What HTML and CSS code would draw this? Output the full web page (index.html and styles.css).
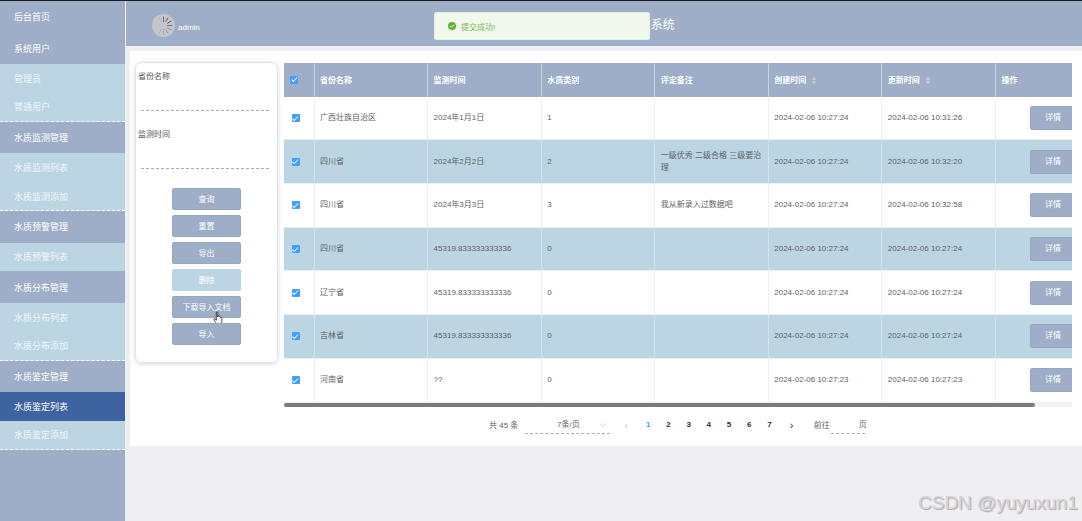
FILE: index.html
```html
<!DOCTYPE html>
<html lang="zh">
<head>
<meta charset="utf-8">
<title>水质监测预警管理系统</title>
<link rel="stylesheet" href="styles.css">
</head>
<body>
<div class="app">
  <nav class="sidebar">
    <div class="nav-item dark tall">后台首页</div>
    <div class="nav-item dark tall">系统用户</div>
    <div class="nav-item light">管理员</div>
    <div class="nav-item light end">普通用户</div>
    <div class="nav-item dark tall">水质监测管理</div>
    <div class="nav-item light">水质监测列表</div>
    <div class="nav-item light end">水质监测添加</div>
    <div class="nav-item dark tall">水质预警管理</div>
    <div class="nav-item light">水质预警列表</div>
    <div class="nav-item dark tall">水质分布管理</div>
    <div class="nav-item light">水质分布列表</div>
    <div class="nav-item light end">水质分布添加</div>
    <div class="nav-item dark tall">水质鉴定管理</div>
    <div class="nav-item active">水质鉴定列表</div>
    <div class="nav-item light end">水质鉴定添加</div>
  </nav>
  <div class="main">
    <header class="topbar">
      <svg class="avatar" viewBox="0 0 24 24" aria-hidden="true">
        <circle cx="12" cy="12" r="12" fill="#c4c6cb"/>
        <g stroke-width="1" stroke-linecap="round">
          <path stroke="#6d7076" d="M12 3v5"/>
          <path stroke="#5c5f65" d="M16.5 4.2l-2 3.5"/>
          <path stroke="#55585e" d="M19.8 7.5l-3.5 2"/>
          <path stroke="#777a80" d="M21 12h-5"/>
          <path stroke="#8b8e94" d="M19.8 16.5l-3.5-2"/>
          <path stroke="#9a9da2" d="M16.5 19.8l-2-3.5"/>
          <path stroke="#a6a9ae" d="M12 21v-5"/>
          <path stroke="#adb0b4" d="M7.5 19.8l2-3.5"/>
          <path stroke="#b2b4b8" d="M7.5 4.2l2 3.5"/>
        </g>
      </svg>
      <span class="admin">admin</span>
      <h1 class="title">水质监测预警管理系统</h1>
    </header>
    <section class="content">
      <aside class="filter">
        <label class="field-label">省份名称</label>
        <div class="field-line"></div>
        <label class="field-label second">监测时间</label>
        <div class="field-line"></div>
        <div class="actions">
          <button class="btn">查询</button>
          <button class="btn">重置</button>
          <button class="btn">导出</button>
          <button class="btn pale">删除</button>
          <button class="btn hover">下载导入文档
            <svg class="hand" viewBox="0 0 12 16" aria-hidden="true">
              <path d="M3.6 1.6c0-1 1.5-1 1.5 0v4.6l.2-1c.3-.8 1.4-.6 1.4.3l.1.8c.3-.8 1.4-.6 1.4.3l.1.7c.4-.7 1.4-.4 1.4.4v3.6c0 1.2-.5 2-1 3H4.3C3.6 13.3 2.9 12.2 1 9.5c-.6-.9.4-1.800 1.200-1.100L3.6 9.700z" fill="#fff" stroke="#222" stroke-width=".9" stroke-linejoin="round"/>
            </svg>
          </button>
          <button class="btn">导入</button>
        </div>
      </aside>
      <div class="table-panel">
        <div class="table-clip">
          <table class="grid">
            <thead>
              <tr>
                <th class="c-check"><span class="check"></span></th>
                <th>省份名称</th>
                <th>监测时间</th>
                <th>水质类别</th>
                <th>评定备注</th>
                <th>创建时间<svg class="sort" viewBox="0 0 6 7" aria-hidden="true"><path d="M3 0l2.500 2.700H.5zM3 7L.5 4.300h5z"/></svg></th>
                <th>更新时间<svg class="sort" viewBox="0 0 6 7" aria-hidden="true"><path d="M3 0l2.500 2.700H.5zM3 7L.5 4.300h5z"/></svg></th>
                <th class="c-op">操作</th>
              </tr>
            </thead>
            <tbody>
              <tr><td class="c-check"><span class="check"></span></td><td>广西壮族自治区</td><td>2024年1月1日</td><td>1</td><td></td><td>2024-02-06 10:27:24</td><td>2024-02-06 10:31:26</td><td class="c-op"><button class="detail">详情</button></td></tr>
              <tr><td class="c-check"><span class="check"></span></td><td>四川省</td><td>2024年2月2日</td><td>2</td><td>一级优秀 二级合格 三级要治理</td><td>2024-02-06 10:27:24</td><td>2024-02-06 10:32:20</td><td class="c-op"><button class="detail">详情</button></td></tr>
              <tr><td class="c-check"><span class="check"></span></td><td>四川省</td><td>2024年3月3日</td><td>3</td><td>我从新录入过数据吧</td><td>2024-02-06 10:27:24</td><td>2024-02-06 10:32:58</td><td class="c-op"><button class="detail">详情</button></td></tr>
              <tr><td class="c-check"><span class="check"></span></td><td>四川省</td><td>45319.833333333336</td><td>0</td><td></td><td>2024-02-06 10:27:24</td><td>2024-02-06 10:27:24</td><td class="c-op"><button class="detail">详情</button></td></tr>
              <tr><td class="c-check"><span class="check"></span></td><td>辽宁省</td><td>45319.833333333336</td><td>0</td><td></td><td>2024-02-06 10:27:24</td><td>2024-02-06 10:27:24</td><td class="c-op"><button class="detail">详情</button></td></tr>
              <tr><td class="c-check"><span class="check"></span></td><td>吉林省</td><td>45319.833333333336</td><td>0</td><td></td><td>2024-02-06 10:27:24</td><td>2024-02-06 10:27:24</td><td class="c-op"><button class="detail">详情</button></td></tr>
              <tr><td class="c-check"><span class="check"></span></td><td>河南省</td><td>??</td><td>0</td><td></td><td>2024-02-06 10:27:23</td><td>2024-02-06 10:27:23</td><td class="c-op"><button class="detail">详情</button></td></tr>
            </tbody>
          </table>
        </div>
        <div class="scrollbar"><div class="thumb"></div></div>
        <div class="pagination">
          <span class="total">共 45 条</span>
          <span class="size">7条/页<svg class="chev-down" viewBox="0 0 8 8" aria-hidden="true"><path d="M1 2.500l3 3 3-3" fill="none" stroke="#c0c4cc" stroke-width=".8"/></svg></span>
          <span class="page arrow muted">‹</span>
          <span class="page current">1</span>
          <span class="page">2</span>
          <span class="page">3</span>
          <span class="page">4</span>
          <span class="page">5</span>
          <span class="page">6</span>
          <span class="page">7</span>
          <span class="page arrow next">›</span>
          <span class="jump">前往</span>
          <span class="jump-input">页</span>
        </div>
      </div>
    </section>
  </div>
</div>
<div class="toast">
  <svg class="toast-icon" viewBox="0 0 10 10" aria-hidden="true">
    <circle cx="5" cy="5" r="4" fill="#5cb52f"/>
    <path d="M3 5.100l1.500 1.400L7 3.800" fill="none" stroke="#fff" stroke-width="1"/>
  </svg>
  <span>提交成功!</span>
</div>
<div class="watermark">CSDN @yuyuxun1</div>
</body>
</html>
```
FILE: styles.css
```css
* { box-sizing: border-box; }
html, body { margin: 0; height: 100%; overflow: hidden; }
body {
  font-family: "Liberation Sans", "Noto Sans CJK SC", sans-serif;
  font-size: 8px;
  color: #606266;
  background: #eeeef3;
  border-top: 1px solid #1c1c1c;
}
.app { display: flex; height: 520px; }

.sidebar {
  width: 125px;
  flex: none;
  background: #9eaec8;
  color: #fff;
}
.nav-item {
  display: flex;
  align-items: center;
  padding-left: 14px;
  font-size: 9px;
  height: 28.800px;
}
.nav-item.tall { height: 31.600px; }
.nav-item.light { background: #bcd5e3; color: #eff5f9; }
.nav-item.end { border-bottom: 1px dashed #fff; }
.nav-item.active { background: #3e63a1; }

.main { flex: 1; min-width: 0; margin-left: 1px; }
.topbar {
  height: 45px;
  background: #9eaec8;
  display: flex;
  align-items: center;
  padding-left: 26px;
  color: #fff;
}
.avatar { width: 23px; height: 23px; flex: none; margin-top: 4px; }
.admin { font-size: 8px; margin: 8px 0 0 3px; }
.title {
  font-size: 12px;
  font-weight: 400;
  margin: 0 0 0 355px;
  white-space: nowrap;
}

.content {
  margin: 5px 0 0 4px;
  height: 395px;
  background: #fff;
  display: flex;
  align-items: flex-start;
  padding: 11px 0 0 5px;
}
.filter {
  width: 143px;
  height: 301px;
  flex: none;
  border: 1px solid #dfe4ef;
  border-radius: 7px;
  box-shadow: 0 1px 4px rgba(120, 140, 180, .35);
  padding: 8px 8px 0 2px;
}
.field-label { display: block; line-height: 12px; color: #555; }
.field-label.second { margin-top: 18px; }
.field-line {
  height: 1px;
  margin: 27px 0 0 3px;
  border-bottom: 1px dashed #9eaec8;
}
.actions {
  display: flex;
  flex-direction: column;
  gap: 5.500px;
  align-items: center;
  margin-top: 19px;
  padding-left: 6px;
}
.btn {
  position: relative;
  width: 69px;
  height: 21.500px;
  padding: 0;
  border: 1px solid #96a7c2;
  border-radius: 2px;
  background: #9eaec8;
  color: #fff;
  font: inherit;
}
.btn.pale { background: #bcd5e3; border-color: #bcd5e3; }
.hand {
  position: absolute;
  left: 40px;
  top: 14px;
  width: 11px;
  height: 15px;
}

.table-panel { width: 788px; margin-left: 6px; margin-top: 1px; }
.table-clip { overflow: hidden; width: 788px; }
.grid {
  width: 836px;
  table-layout: fixed;
  border-collapse: separate;
  border-spacing: 0;
}
.grid th, .grid td {
  padding: 0 5.500px;
  width: 113.500px;
  text-align: left;
  border-right: 1px solid #ebeef5;
  border-bottom: 1px solid #ebeef5;
}
.grid th {
  height: 33.700px;
  background: #9eaec8;
  color: #fff;
  font-weight: 700;
  border-right-color: #c8d3e2;
  border-bottom: 0;
}
.grid td { height: 43.700px; line-height: 12px; }
.grid tbody tr:nth-child(even) td { background: #bcd5e3; border-right-color: #d3e3ec; }
.grid .c-check { width: 30.500px; padding: 0 0 0 7.500px; }
.grid th.c-check { padding-left: 6px; }
.grid .c-op { width: 124px; border-right: 0; }
.grid td.c-op { padding-left: 34px; }
.check {
  display: block;
  width: 8px;
  height: 8px;
  border-radius: 1px;
  background: #409eff;
  position: relative;
}
.check::after {
  content: "";
  position: absolute;
  left: 2.500px;
  top: .5px;
  width: 2px;
  height: 4.500px;
  border: solid #fff;
  border-width: 0 1px 1px 0;
  transform: rotate(45deg);
}
.sort {
  display: inline-block;
  width: 6px;
  height: 7px;
  margin-left: 5px;
  vertical-align: -1px;
  fill: #c3ccdc;
}
.detail {
  display: block;
  width: 46px;
  height: 24px;
  padding: 0;
  border: 1px solid #96a7c2;
  border-radius: 2px;
  background: #9eaec8;
  color: #fff;
  font: inherit;
}

.scrollbar { height: 4px; background: #f3f3f3; }
.thumb { width: 751px; height: 4px; background: #7b7b7b; border-radius: 2px; }

.pagination {
  display: flex;
  align-items: center;
  height: 20px;
  margin: 8px 0 0 205px;
  color: #606266;
}
.total { width: 36px; }
.size {
  position: relative;
  align-self: flex-start;
  width: 85px;
  height: 19px;
  line-height: 20px;
  padding-left: 32px;
  border-bottom: 1px dashed #9eaec8;
  margin-right: 8px;
}
.chev-down {
  position: absolute;
  right: 3px;
  top: 6px;
  width: 8px;
  height: 8px;
}
.page {
  width: 20.200px;
  text-align: center;
  font-weight: 700;
  color: #303133;
}
.page.current { color: #409eff; }
.page.arrow { font-size: 11px; font-weight: 400; }
.page.muted { color: #c0c4cc; margin-left: -2px; margin-right: 2px; }
.page.next { margin-left: 2px; }
.jump { margin-left: 12px; }
.jump-input {
  align-self: flex-start;
  width: 34px;
  height: 19px;
  line-height: 20px;
  margin-left: 1px;
  text-indent: 28px;
  white-space: nowrap;
  border-bottom: 1px dashed #9eaec8;
}

.toast {
  position: absolute;
  left: 434px;
  top: 12px;
  width: 216px;
  height: 28px;
  display: flex;
  align-items: center;
  gap: 4px;
  padding-left: 12px;
  background: #f0f9eb;
  border: 1px solid #e1f3d8;
  border-radius: 2px;
  color: #76b858;
}
.toast-icon { width: 10px; height: 10px; }
.watermark {
  position: absolute;
  left: 918px;
  top: 492px;
  font-size: 19px;
  color: #d4d4d6;
  text-shadow: 1px 1px 1px #a8a8a8;
  white-space: nowrap;
}
```
